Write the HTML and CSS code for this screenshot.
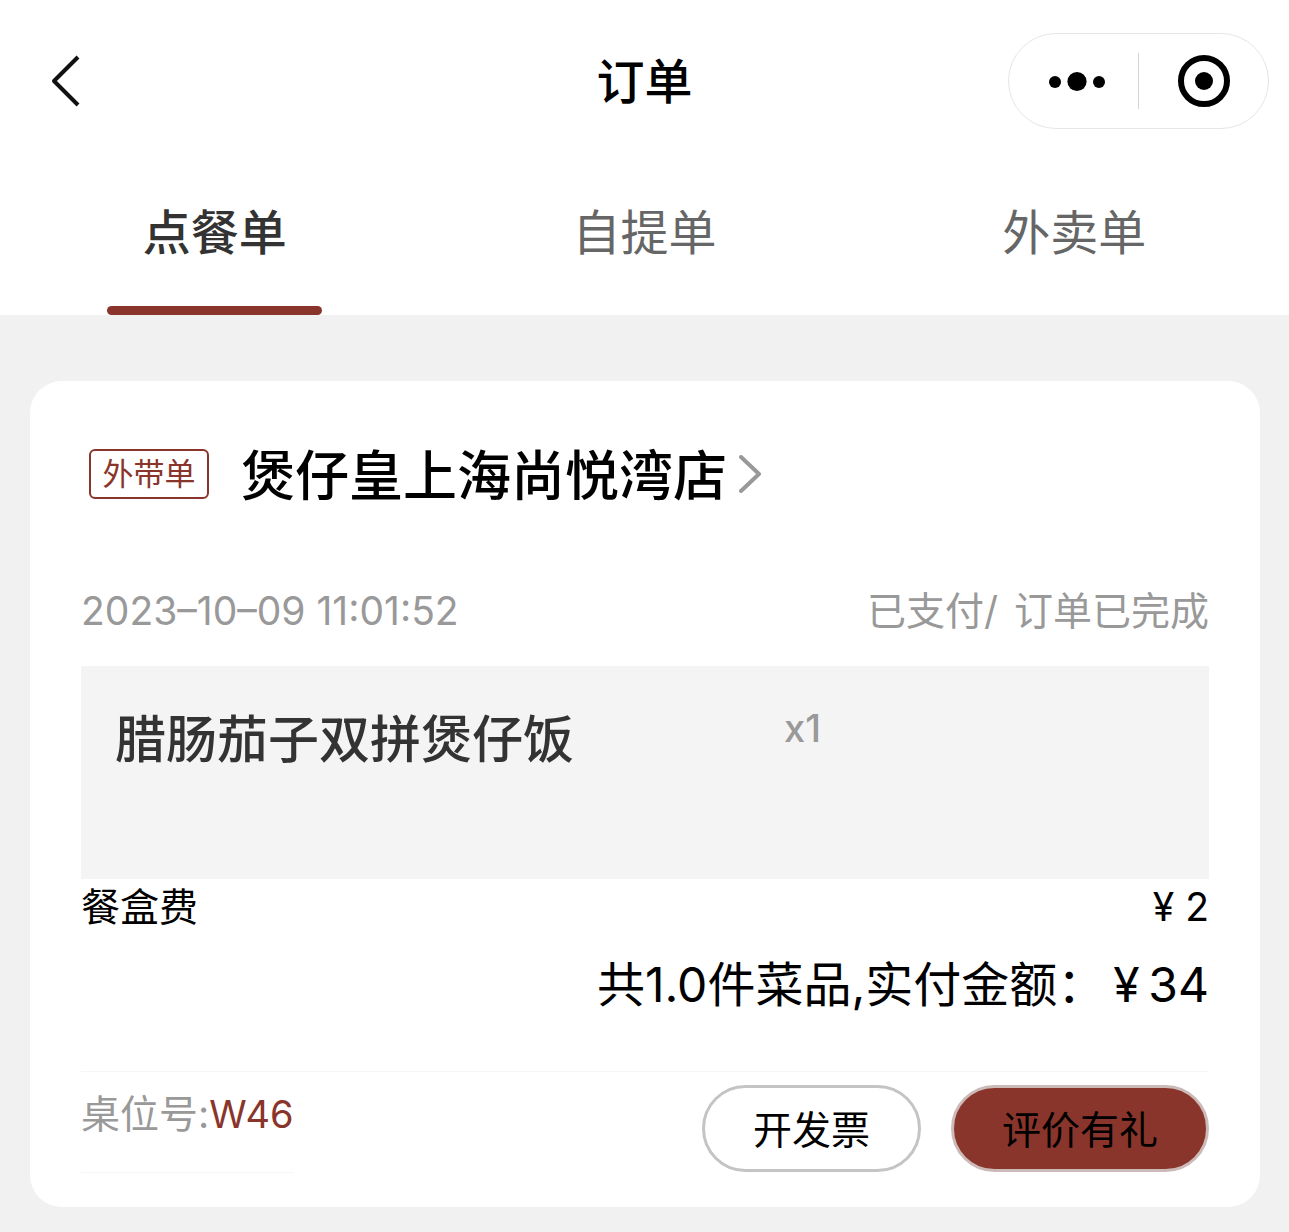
FILE: index.html
```html
<!DOCTYPE html>
<html lang="zh-CN">
<head>
<meta charset="utf-8">
<meta name="viewport" content="width=device-width, initial-scale=1">
<title>订单</title>
<link rel="stylesheet" href="styles.css">
</head>
<body>
<header class="navbar">
  <button class="back" aria-label="返回">
    <svg width="32" height="56" viewBox="0 0 32 56" fill="none" stroke="#111" stroke-width="4" stroke-linejoin="round"><path d="M30 4 6 28l24 24"/></svg>
  </button>
  <h1 class="title">订单</h1>
  <div class="capsule">
    <button class="capsule-btn" aria-label="更多">
      <svg width="66" height="24" viewBox="0 0 66 24"><circle cx="14" cy="13" r="6"/><circle cx="36" cy="12.500" r="9.600"/><circle cx="58" cy="13" r="6"/></svg>
    </button>
    <span class="capsule-line"></span>
    <button class="capsule-btn" aria-label="关闭">
      <svg width="54" height="54" viewBox="0 0 54 54"><circle cx="27" cy="27" r="23" fill="none" stroke="#000" stroke-width="6"/><circle cx="27" cy="27" r="9"/></svg>
    </button>
  </div>
</header>
<nav class="tabs">
  <a class="tab active" href="#dine">点餐单</a>
  <a class="tab" href="#pickup">自提单</a>
  <a class="tab" href="#delivery">外卖单</a>
</nav>
<main class="content">
  <article class="card">
    <a class="shop" href="#shop">
      <span class="tag">外带单</span>
      <span class="shop-name">煲仔皇上海尚悦湾店</span>
      <svg class="chevron" width="24" height="40" viewBox="0 0 24 40" fill="none" stroke="#999" stroke-width="4" stroke-linecap="round" stroke-linejoin="round"><path d="M3 2 21 19 3 36"/></svg>
    </a>
    <div class="meta">
      <time datetime="2023-10-09T11:01:52">2023–10–09 11:01:52</time>
      <span class="status"><span>已支付/ </span><span>订单已完成</span></span>
    </div>
    <div class="item"><span class="item-name">腊肠茄子双拼煲仔饭</span><span class="item-count">x1</span></div>
    <div class="fee"><span>餐盒费</span><span>¥ 2</span></div>
    <div class="total"><span>共1.0件菜品,实付金额：</span><span>¥&thinsp;34</span></div>
    <footer class="footer">
      <p class="seat">桌位号:<span class="seat-no">W46</span></p>
      <div class="actions">
        <button class="btn">开发票</button>
        <button class="btn primary">评价有礼</button>
      </div>
    </footer>
  </article>
</main>
</body>
</html>
```
FILE: styles.css
```css
* { box-sizing: border-box; }
body {
  margin: 0;
  min-height: 100vh;
  background: #f1f1f1;
  color: #000;
  font-family: Inter, "Noto Sans CJK SC", sans-serif;
}
button { font: inherit; color: inherit; background: none; border: 0; padding: 0; cursor: pointer; }
a { color: inherit; text-decoration: none; }
svg { display: block; }
.navbar {
  display: grid;
  grid-template-columns: 1fr auto 1fr;
  align-items: center;
  height: 162px;
  padding: 0 20px;
  background: #fff;
}
.back { justify-self: start; padding-left: 28px; }
.title { margin: 0; padding-top: 2px; font-size: 48px; line-height: 72px; font-weight: 500; }
.capsule {
  justify-self: end;
  display: flex;
  align-items: center;
  width: 261px;
  height: 96px;
  border: 1px solid #e6e6e6;
  border-radius: 48px;
}
.capsule-btn { flex: 1; display: flex; justify-content: center; }
.capsule-line { width: 1px; height: 56px; background: #d4d4d4; }
.tabs { display: grid; grid-template-columns: repeat(3, 1fr); background: #fff; }
.tab {
  display: flex;
  flex-direction: column;
  align-items: center;
  height: 153px;
  padding-top: 35px;
  font-size: 48px;
  line-height: 72px;
  color: #666;
}
.tab.active { color: #333; font-weight: 500; }
.tab.active::after {
  content: "";
  width: 50%;
  height: 9px;
  margin-top: auto;
  border-radius: 5px;
  background: #8a352b;
}
.content { padding: 66px 29px 24px 30px; }
.card { padding: 60px 51px 34px; border-radius: 32px; background: #fff; }
.shop { display: flex; align-items: center; height: 68px; padding-left: 8px; }
.tag {
  width: 120px;
  height: 50px;
  margin: 0 32px 2px 0;
  border: 2px solid #8a352b;
  border-radius: 6px;
  color: #8a352b;
  font-size: 31px;
  line-height: 46px;
  text-align: center;
}
.shop-name { padding-top: 4px; font-size: 54px; line-height: 68px; font-weight: 500; }
.chevron { margin-left: 11px; }
.meta {
  display: flex;
  justify-content: space-between;
  margin-top: 74px;
  color: #999;
  font-size: 39px;
  line-height: 56px;
}
.status { display: flex; gap: 16px; }
.item { display: flex; height: 213px; margin-top: 27px; padding: 34px; background: #f4f4f4; }
.item-name { width: 669px; padding-top: 2px; color: #333; font-size: 51px; line-height: 76px; font-weight: 500; }
.item-count { color: #999; font-size: 38px; line-height: 56px; font-weight: 500; }
.fee { display: flex; justify-content: space-between; font-size: 39px; line-height: 56px; }
.total { display: flex; justify-content: flex-end; gap: 8px; margin-top: 14px; font-size: 48px; line-height: 72px; }
.footer {
  display: flex;
  justify-content: space-between;
  margin-top: 50px;
  border-top: 1px solid #f6f6f6;
}
.seat { height: 101px; margin: 0; padding-top: 14px; border-bottom: 1px solid #f6f6f6; color: #999; font-size: 39px; line-height: 56px; }
.seat-no { color: #8a352b; font-size: 38px; }
.actions { display: flex; gap: 30px; padding-top: 13px; }
.btn { height: 87px; padding: 0 48px 4px; border: 3px solid #c4c4c4; border-radius: 44px; font-size: 39px; }
.btn.primary { border-color: #ccbab8; background: #8a352b; }
```
